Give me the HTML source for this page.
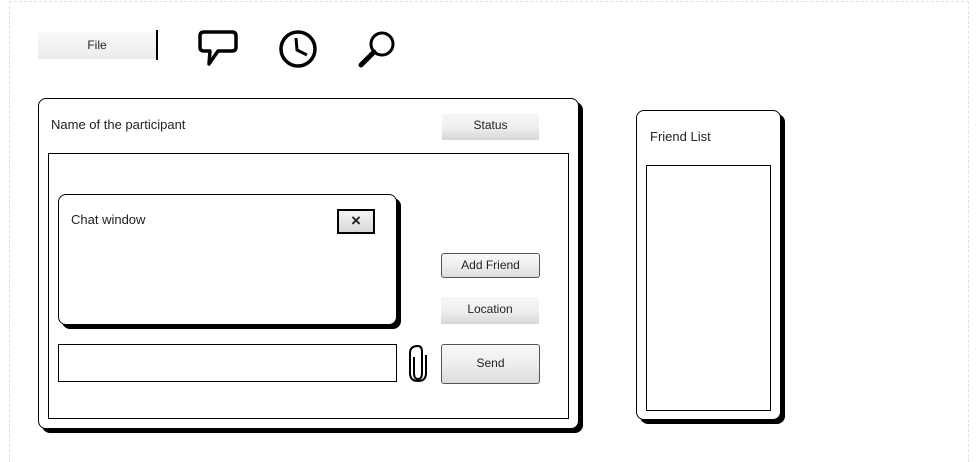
<!DOCTYPE html>
<html style="overflow:hidden;width:978px;height:462px"><head><style>
*{box-sizing:border-box;margin:0;padding:0}
body{width:978px;height:462px;background:#fff;position:relative;overflow:hidden;font-family:"Liberation Sans",sans-serif;color:#222}
.a{position:absolute}
.page{left:9px;top:1px;width:960px;height:461px;border:1px dashed #e0e0e0;border-bottom:none}
.panel{border:1.5px solid #000;border-radius:8px;background:#fff;box-shadow:4px 4px 0 #000}
.box{border:1px solid #000;background:#fff}
.grad{background:linear-gradient(#f7f7f7,#f0f0f0 50%,#d6d6d6);font-size:12px;text-align:center}
.btn{border:1px solid #555;border-radius:3px;background:linear-gradient(#f8f8f8,#eee 50%,#dcdcdc);font-size:12px;text-align:center}
.t{font-size:13px}
</style></head><body>
<div class="a page"></div>
<div class="a grad" style="left:38px;top:32px;width:118px;height:27px;line-height:26px;background:linear-gradient(#f8f8f8,#ececec)">File</div>
<div class="a" style="left:156px;top:30px;width:1.5px;height:30px;background:#000"></div>
<svg class="a" style="left:196px;top:28px" width="46" height="40" viewBox="0 0 46 40"><path d="M8 4H36Q40 4 40 8V19Q40 23 36 23H22L13 36L14 23H8Q4 23 4 19V8Q4 4 8 4Z" fill="none" stroke="#000" stroke-width="3.5" stroke-linejoin="round"/></svg>
<svg class="a" style="left:276px;top:28px" width="44" height="42" viewBox="0 0 44 42"><circle cx="22" cy="21" r="17" fill="none" stroke="#000" stroke-width="3.5"/><path d="M20 10L21 22L31 27" fill="none" stroke="#000" stroke-width="3"/></svg>
<svg class="a" style="left:356px;top:28px" width="44" height="42" viewBox="0 0 44 42"><circle cx="26" cy="16" r="11" fill="none" stroke="#000" stroke-width="3"/><path d="M18 24L5 37" stroke="#000" stroke-width="5" stroke-linecap="round"/></svg>

<div class="a panel" style="left:38px;top:98px;width:541px;height:331px"></div>
<div class="a t" style="left:51px;top:117px">Name of the participant</div>
<div class="a grad" style="left:442px;top:114px;width:97px;height:26px;line-height:23px">Status</div>
<div class="a box" style="left:48px;top:153px;width:521px;height:266px"></div>
<div class="a panel" style="left:58px;top:194px;width:339px;height:131px"></div>
<div class="a t" style="left:71px;top:212px">Chat window</div>
<div class="a" style="left:337px;top:209px;width:38px;height:25px;border:2px solid #000;background:linear-gradient(#f5f5f5,#d8d8d8);text-align:center;font-weight:bold;font-size:17px;line-height:20px">×</div>
<div class="a btn" style="left:441px;top:253px;width:99px;height:25px;line-height:23px">Add Friend</div>
<div class="a grad" style="left:441px;top:297px;width:98px;height:27px;line-height:24px">Location</div>
<div class="a box" style="left:58px;top:344px;width:339px;height:38px"></div>
<svg class="a" style="left:406px;top:343px" width="24" height="40" viewBox="0 0 24 40"><path d="M8 14V30Q8 36 12 36Q16 36 16 30V9Q16 3 12 3Q4 3 4 10V30Q4 38 12 38Q20 38 20 30V12" fill="none" stroke="#000" stroke-width="2"/></svg>
<div class="a btn" style="left:441px;top:344px;width:99px;height:40px;line-height:36px">Send</div>

<div class="a panel" style="left:636px;top:110px;width:145px;height:310px"></div>
<div class="a t" style="left:650px;top:129px">Friend List</div>
<div class="a box" style="left:646px;top:165px;width:125px;height:246px"></div>
</body></html>
